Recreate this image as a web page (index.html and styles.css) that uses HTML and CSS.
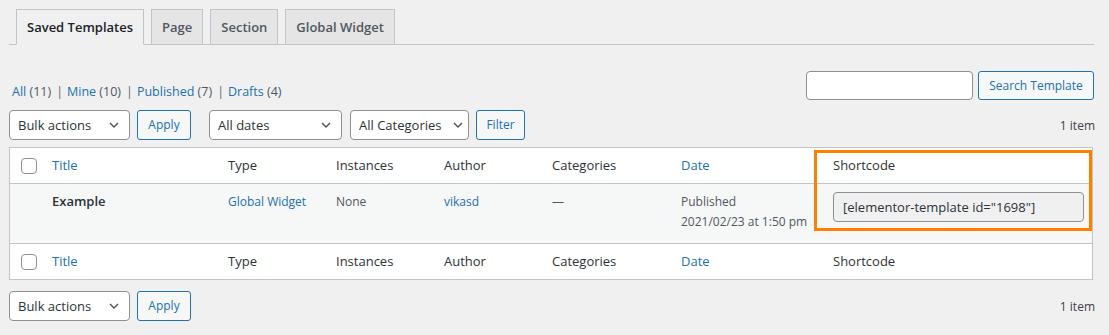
FILE: index.html
```html
<!DOCTYPE html>
<html lang="en">
<head>
  <meta charset="UTF-8">
  <title>Templates</title>
  <link rel="stylesheet" href="styles.css">
</head>
<body>
  <div class="wrap">
    <nav class="nav-tabs">
      <a class="nav-tab active" href="#">Saved Templates</a>
      <a class="nav-tab" href="#">Page</a>
      <a class="nav-tab" href="#">Section</a>
      <a class="nav-tab" href="#">Global Widget</a>
    </nav>

    <div class="list-head">
      <ul class="subsubsub">
        <li><a href="#">All <span class="count">(11)</span></a><span class="sep">|</span></li>
        <li><a href="#">Mine <span class="count">(10)</span></a><span class="sep">|</span></li>
        <li><a href="#">Published <span class="count">(7)</span></a><span class="sep">|</span></li>
        <li><a href="#">Drafts <span class="count">(4)</span></a></li>
      </ul>
      <div class="search-box">
        <input class="search-input" type="search">
        <button class="button">Search Template</button>
      </div>
    </div>

    <div class="tablenav">
      <div class="select bulk"><span>Bulk actions</span>
        <svg width="16" height="16" viewBox="0 0 16 16"><polyline points="4,6 8,10 12,6" fill="none" stroke="#50575e" stroke-width="1.5"/></svg>
      </div>
      <button class="button apply">Apply</button>
      <div class="select dates"><span>All dates</span>
        <svg width="16" height="16" viewBox="0 0 16 16"><polyline points="4,6 8,10 12,6" fill="none" stroke="#50575e" stroke-width="1.5"/></svg>
      </div>
      <div class="select cats"><span>All Categories</span>
        <svg width="16" height="16" viewBox="0 0 16 16"><polyline points="4,6 8,10 12,6" fill="none" stroke="#50575e" stroke-width="1.5"/></svg>
      </div>
      <button class="button filter">Filter</button>
      <div class="num-items">1 item</div>
    </div>

    <div class="table-box">
      <table class="list-table">
        <colgroup>
          <col style="width:32px">
          <col style="width:176px">
          <col style="width:108px">
          <col style="width:108px">
          <col style="width:108px">
          <col style="width:129px">
          <col style="width:152px">
          <col>
        </colgroup>
        <thead>
          <tr>
            <th class="check-col"><span class="checkbox"></span></th>
            <th><a href="#">Title</a></th>
            <th>Type</th>
            <th>Instances</th>
            <th>Author</th>
            <th>Categories</th>
            <th><a href="#">Date</a></th>
            <th>Shortcode</th>
          </tr>
        </thead>
        <tbody>
          <tr class="data-row">
            <td></td>
            <td><strong class="row-title">Example</strong></td>
            <td><a href="#">Global Widget</a></td>
            <td>None</td>
            <td><a href="#">vikasd</a></td>
            <td>—</td>
            <td class="date-col">Published<br>2021/02/23 at 1:50 pm</td>
            <td><input class="shortcode" type="text" readonly value='[elementor-template id="1698"]'></td>
          </tr>
        </tbody>
        <tfoot>
          <tr>
            <th class="check-col"><span class="checkbox"></span></th>
            <th><a href="#">Title</a></th>
            <th>Type</th>
            <th>Instances</th>
            <th>Author</th>
            <th>Categories</th>
            <th><a href="#">Date</a></th>
            <th>Shortcode</th>
          </tr>
        </tfoot>
      </table>
      <div class="highlight"></div>
    </div>

    <div class="tablenav bottom">
      <div class="select bulk"><span>Bulk actions</span>
        <svg width="16" height="16" viewBox="0 0 16 16"><polyline points="4,6 8,10 12,6" fill="none" stroke="#50575e" stroke-width="1.5"/></svg>
      </div>
      <button class="button apply">Apply</button>
      <div class="num-items">1 item</div>
    </div>
  </div>
</body>
</html>
```

FILE: styles.css
```css
body {
  margin: 0;
  background-color: #f0f0f1;
  color: #3c434a;
  font-family: "Open Sans", "Noto Sans", sans-serif;
  font-size: 12px;
}

a {
  color: #2271b1;
  text-decoration: none;
}

.wrap {
  padding: 0 15px 0 9px;
}

/* tabs */
.nav-tabs {
  display: flex;
  align-items: flex-end;
  padding-top: 9px;
  border-bottom: 1px solid #c3c4c7;
}

.nav-tab {
  margin-left: 7px;
  margin-bottom: -1px;
  padding: 5px 10px;
  border: 1px solid #c3c4c7;
  background-color: #e5e5e5;
  color: #50575e;
  font-size: 13px;
  font-weight: 600;
  line-height: 24px;
  white-space: nowrap;
}

.nav-tab.active {
  background-color: #f0f0f1;
  border-bottom-color: #f0f0f1;
  color: #1d2327;
}

/* views + search */
.list-head {
  display: flex;
  justify-content: space-between;
  margin-top: 26px;
}

.subsubsub {
  list-style: none;
  margin: 13px 0 0 3px;
  padding: 0;
  display: flex;
  line-height: 16px;
  font-size: 12.5px;
  color: #646970;
}

.subsubsub .count {
  color: #50575e;
}

.subsubsub .sep {
  margin: 0 4px 0 5px;
}

.search-box {
  display: flex;
  gap: 5px;
}

.search-input {
  width: 167px;
  height: 29px;
  box-sizing: border-box;
  margin: 0;
  border: 1px solid #8c8f94;
  border-radius: 4px;
  background: #fff;
}

.button {
  height: 30px;
  box-sizing: border-box;
  margin: 0;
  padding: 0 8px;
  border: 1px solid #2271b1;
  border-radius: 3px;
  background-color: #f6f7f7;
  color: #2271b1;
  font-family: inherit;
  font-size: 12px;
  line-height: 28px;
  white-space: nowrap;
}

.search-box .button {
  height: 29px;
  width: 116px;
}

/* bulk / filter bar */
.tablenav {
  display: flex;
  align-items: center;
  margin-top: 10px;
  height: 30px;
}

.tablenav.bottom {
  margin-top: 11px;
}

.select {
  display: flex;
  align-items: center;
  justify-content: space-between;
  height: 30px;
  box-sizing: border-box;
  padding: 0 7px 0 8px;
  border: 1px solid #8c8f94;
  border-radius: 4px;
  background-color: #fff;
  color: #2c3338;
  font-size: 13px;
  white-space: nowrap;
}

.select.bulk { width: 121px; }
.select.dates { width: 133px; margin-left: 18px; }
.select.cats { width: 119px; margin-left: 8px; padding-right: 2px; }

.apply { width: 54px; margin-left: 7px; }
.filter { width: 49px; margin-left: 7px; }

.num-items {
  margin-left: auto;
  margin-right: -1px;
  color: #3c434a;
}

/* table */
.table-box {
  position: relative;
  margin-top: 7px;
}

.list-table {
  width: 1084px;
  table-layout: fixed;
  border-collapse: separate;
  border-spacing: 0;
  border: 1px solid #c3c4c7;
  background-color: #fff;
}

.list-table th {
  padding: 8px 10px;
  text-align: left;
  font-weight: 400;
  font-size: 13px;
  line-height: 19px;
  color: #2c3338;
}

.list-table thead th {
  border-bottom: 1px solid #c3c4c7;
}

.list-table tfoot th {
  border-top: 1px solid #c3c4c7;
}

.list-table th.check-col {
  padding: 10px 0 0 11px;
  vertical-align: top;
}

.checkbox {
  display: block;
  width: 16px;
  height: 16px;
  box-sizing: border-box;
  border: 1px solid #8c8f94;
  border-radius: 4px;
  background: #fff;
}

.data-row {
  height: 59px;
  background-color: #f6f7f7;
}

.data-row td {
  padding: 8px 10px;
  vertical-align: top;
  line-height: 19.5px;
  color: #50575e;
}

.row-title {
  font-size: 13px;
  font-weight: 600;
  color: #2c3338;
}

.date-col {
  white-space: nowrap;
}

.shortcode {
  display: block;
  width: 251px;
  height: 30px;
  box-sizing: border-box;
  margin: 0;
  padding: 0 9px;
  border: 1px solid #8c8f94;
  border-radius: 4px;
  background-color: #f0f0f1;
  color: #2c3338;
  font-family: inherit;
  font-size: 13px;
}

/* orange annotation box drawn over the shortcode column */
.highlight {
  position: absolute;
  left: 805px;
  top: 3px;
  width: 278px;
  height: 81px;
  box-sizing: border-box;
  border: 3px solid #ff8000;
  pointer-events: none;
}
```
